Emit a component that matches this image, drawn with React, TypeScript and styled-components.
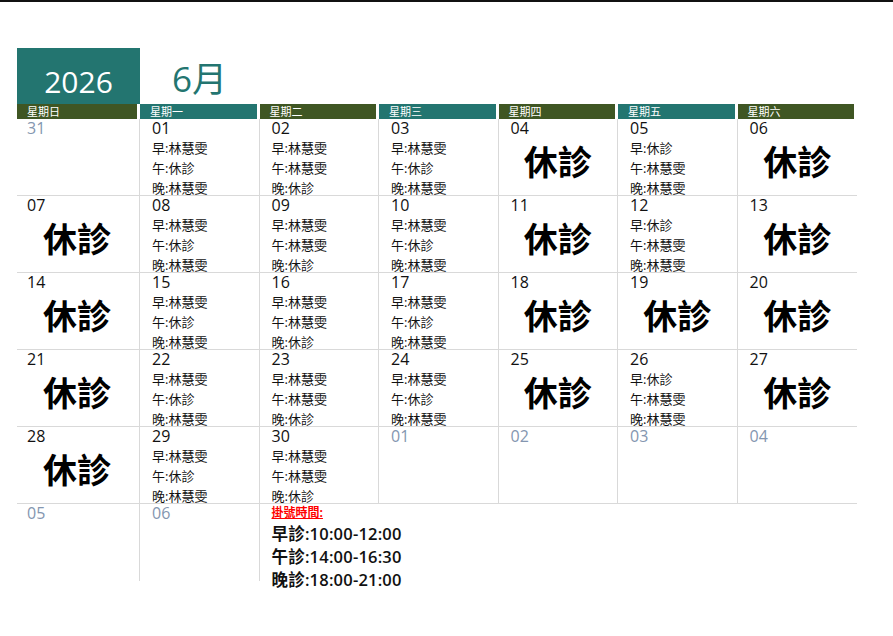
import React from "react";
import styled, { createGlobalStyle } from "styled-components";

const G = createGlobalStyle`
  body { margin: 0; font-family: "Open Sans", "Noto Sans CJK TC", sans-serif; background: #fff; }
`;
const Page = styled.div`
  border-top: 2px solid #111;
  padding: 46px 0 0 17px;
`;
const Head = styled.div`display: flex; align-items: flex-end; height: 56px;`;
const Year = styled.div`
  width: 123px; height: 56px; background: #237570; color: #fff;
  font-size: 30px; display: flex; align-items: flex-end; justify-content: center; padding-bottom: 2px; box-sizing: border-box;
`;
const Month = styled.div`
  color: #237570; font-size: 35px; margin-left: 32px; line-height: 1; padding-bottom: 8px;
`;
const Grid = styled.div`
  display: grid; grid-template-columns: 123px repeat(6, 119.5px); width: 840px;
`;
const Wd = styled.div<{ $alt: boolean }>`
  background: ${p => (p.$alt ? "#237570" : "#3f5623")}; color: #fff; font-size: 11px;
  height: 15px; line-height: 15px; padding-left: 10px; margin-right: 3px;
`;
const Cell = styled.div<{ $first?: boolean; $noBottom?: boolean; $noRight?: boolean }>`
  height: 77px; box-sizing: border-box; padding-left: 12px;
  border-bottom: ${p => (p.$noBottom ? "none" : "1px solid #d9d9d9")};
  border-right: ${p => (p.$noRight ? "none" : "1px solid #d9d9d9")};
  display: flex; flex-direction: column; overflow: hidden;
  ${p => (p.$first ? "padding-left: 10px;" : "")}
`;
const Num = styled.div<{ $muted?: boolean }>`
  font-size: 16px; line-height: 19px; color: ${p => (p.$muted ? "#8496b0" : "#111")};
`;
const Line = styled.div`font-size: 13px; line-height: 20px; color: #111;`;
const Closed = styled.div`
  height: 44px; display: flex; align-items: center; justify-content: center; padding-right: 12px;
  font-size: 34px; font-weight: 600; color: #000; font-family: "Noto Sans CJK TC", sans-serif;
`;
const Info = styled.div`grid-column: 3 / span 5; padding-left: 12px; height: 84px;`;
const InfoTitle = styled.div`color: #f00; font-size: 12px; text-decoration: underline; font-weight: bold; line-height: 18px;`;
const InfoLine = styled.div`font-size: 16.5px; font-weight: 600; line-height: 23px; color: #111; letter-spacing: 0.2px;`;

const A = ["早:林慧雯", "午:休診", "晚:林慧雯"];
const B = ["早:林慧雯", "午:林慧雯", "晚:休診"];
const C = ["早:休診", "午:林慧雯", "晚:林慧雯"];
type D = { n: string; m?: boolean; s?: string[] | "x" };
const X = "x" as const;
const weeks: D[][] = [
  [{ n: "31", m: true }, { n: "01", s: A }, { n: "02", s: B }, { n: "03", s: A }, { n: "04", s: X }, { n: "05", s: C }, { n: "06", s: X }],
  [{ n: "07", s: X }, { n: "08", s: A }, { n: "09", s: B }, { n: "10", s: A }, { n: "11", s: X }, { n: "12", s: C }, { n: "13", s: X }],
  [{ n: "14", s: X }, { n: "15", s: A }, { n: "16", s: B }, { n: "17", s: A }, { n: "18", s: X }, { n: "19", s: X }, { n: "20", s: X }],
  [{ n: "21", s: X }, { n: "22", s: A }, { n: "23", s: B }, { n: "24", s: A }, { n: "25", s: X }, { n: "26", s: C }, { n: "27", s: X }],
  [{ n: "28", s: X }, { n: "29", s: A }, { n: "30", s: B }, { n: "01", m: true }, { n: "02", m: true }, { n: "03", m: true }, { n: "04", m: true }],
];
const days = ["星期日", "星期一", "星期二", "星期三", "星期四", "星期五", "星期六"];

export default function App() {
  return (
    <Page>
      <G />
      <Head><Year>2026</Year><Month>6月</Month></Head>
      <Grid>
        {days.map((d, i) => <Wd key={d} $alt={i % 2 === 1}>{d}</Wd>)}
        {weeks.flat().map((d, i) => (
          <Cell key={i} $first={i % 7 === 0} $noRight={i % 7 === 6}>
            <Num $muted={d.m}>{d.n}</Num>
            {d.s === "x" ? <Closed>休診</Closed> : d.s?.map(l => <Line key={l}>{l}</Line>)}
          </Cell>
        ))}
        <Cell $first $noBottom><Num $muted>05</Num></Cell>
        <Cell $noBottom><Num $muted>06</Num></Cell>
        <Info>
          <InfoTitle>掛號時間:</InfoTitle>
          <InfoLine>早診:10:00-12:00</InfoLine>
          <InfoLine>午診:14:00-16:30</InfoLine>
          <InfoLine>晚診:18:00-21:00</InfoLine>
        </Info>
      </Grid>
    </Page>
  );
}
